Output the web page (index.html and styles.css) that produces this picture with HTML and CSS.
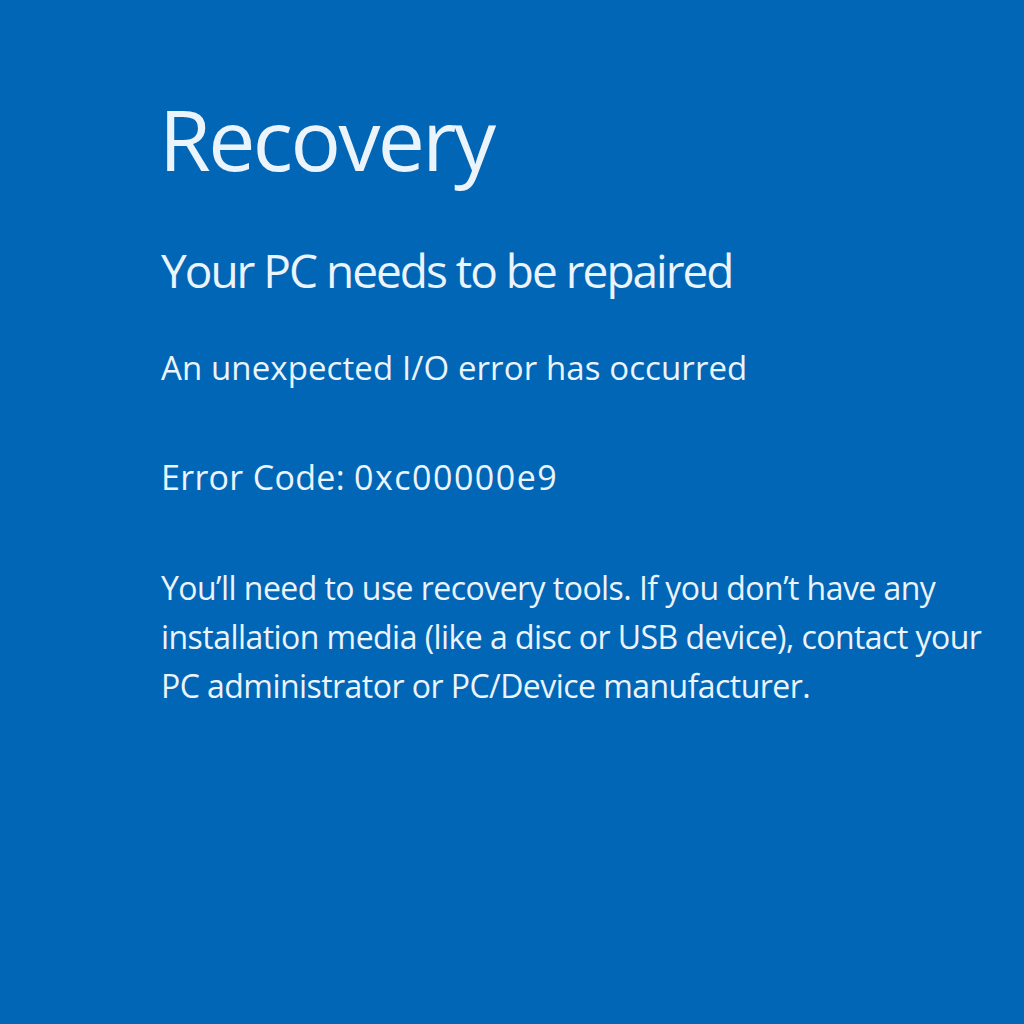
FILE: index.html
```html
<!DOCTYPE html>
<html lang="en">
<head>
<meta charset="utf-8">
<title>Recovery</title>
<link rel="stylesheet" href="styles.css">
</head>
<body>
<main class="screen">
  <h1 class="title">Recovery</h1>
  <h2 class="subtitle">Your PC needs to be repaired</h2>
  <p class="line">An unexpected I/O error has occurred</p>
  <p class="line code">Error Code: <span class="code-value">0xc00000e9</span></p>
  <p class="para">You’ll need to use recovery tools. If you don’t have any installation media (like a disc or USB device), contact your PC administrator or PC/Device manufacturer.</p>
</main>
</body>
</html>
```
FILE: styles.css
```css
html, body {
  margin: 0;
  padding: 0;
  background: #0166b6;
}
.screen {
  width: 1024px;
  height: 1024px;
  box-sizing: border-box;
  padding: 89px 0 0 161px;
  color: #ebf3fb;
  font-family: "Open Sans", "Noto Sans", sans-serif;
  display: flex;
  flex-direction: column;
}
.title {
  margin: 0 0 0 -2px;
  font-size: 84px;
  font-weight: 400;
  line-height: 100px;
  letter-spacing: -2.6px;
}
.subtitle {
  margin: 51px 0 0;
  font-size: 46px;
  font-weight: 400;
  line-height: 60px;
  letter-spacing: -2px;
}
.line {
  margin: 43px 0 0;
  font-size: 33px;
  line-height: 50px;
  letter-spacing: 0.1px;
}
.code {
  margin-top: 59px;
  font-size: 34px;
  letter-spacing: 0.3px;
}
.code-value {
  letter-spacing: 1.5px;
}
.para {
  margin: 61px 0 0;
  font-size: 32px;
  line-height: 49px;
  letter-spacing: -0.55px;
  max-width: 840px;
}
```
